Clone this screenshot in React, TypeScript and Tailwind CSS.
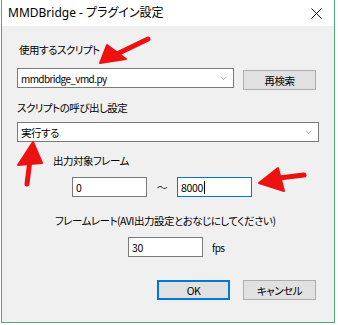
import { ChevronDown } from "lucide-react";

const ui =
  "font-['Noto_Sans_CJK_JP',sans-serif] [font-feature-settings:'palt'] text-[10.5px] leading-[13px] tracking-[-0.5px] text-black";
const latin = "text-[10px] tracking-[-0.6px]";

function Combo({ value, width, mono }: { value: string; width: string; mono?: boolean }) {
  return (
    <div className={`flex items-center h-[20px] bg-white border border-[#7a7a7a] pl-[3px] pr-[5px] ${width}`}>
      <span className={`flex-1 whitespace-nowrap ${mono ? latin : ""}`}>{value}</span>
      <ChevronDown className="w-[9px] h-[9px] text-[#707070]" strokeWidth={1.5} />
    </div>
  );
}

function Field({ value, focused }: { value: string; focused?: boolean }) {
  return (
    <div
      className={`flex items-center h-[20px] w-[75px] bg-white border pl-[3px] ${
        focused ? "border-[#0078d7]" : "border-[#7a7a7a]"
      }`}
    >
      <span className="text-[10.5px] tracking-[-0.3px]">{value}</span>
      {focused && <span className="w-px h-[13px] bg-black ml-px" />}
    </div>
  );
}

function Btn({ label, primary }: { label: string; primary?: boolean }) {
  return (
    <div
      className={`flex items-center justify-center w-[73px] h-[20px] bg-[#e1e1e1] ${
        primary ? "border-2 border-[#0078d7]" : "border border-[#adadad]"
      }`}
    >
      {label}
    </div>
  );
}

export default function App() {
  return (
    <div className="w-[338px] h-[325px] bg-white pl-px overflow-hidden">
      <div className="relative w-[334px] h-[323px] border-x border-b border-[#52a877] bg-[#f0f0f0] flex flex-col">
        {/* title bar */}
        <div className="h-[26px] bg-white flex items-center pl-[6px] pr-[10px] shrink-0">
          <span className="flex-1 font-['Noto_Sans','Noto_Sans_CJK_JP',sans-serif] [font-feature-settings:'palt'] text-[12px] text-black">
            MMDBridge - プラグイン設定
          </span>
          <svg width="11" height="11" viewBox="0 0 11 11" className="mr-[2px]">
            <path d="M0.5 0.5 L10.5 10.5 M10.5 0.5 L0.5 10.5" stroke="#111" strokeWidth="1" />
          </svg>
        </div>

        {/* body */}
        <div className={`${ui} flex flex-col pl-[15px]`}>
          <div className="mt-[17px] pl-[2px]">使用するスクリプト</div>
          <div className="mt-[12px] flex items-start gap-[9px]">
            <Combo value="mmdbridge_vmd.py" width="w-[217px]" mono />
            <div className="mt-[2px]">
              <Btn label="再検索" />
            </div>
          </div>
          <div className="mt-[11px]">スクリプトの呼び出し設定</div>
          <div className="mt-[8px]">
            <Combo value="実行する" width="w-[302px]" />
          </div>

          <div className="mt-[12px] pl-[36px]">出力対象フレーム</div>
          <div className="mt-[10px] pl-[55px] flex items-center">
            <Field value="0" />
            <span className="w-[30px] text-center text-[11px] text-[#333]">～</span>
            <Field value="8000" focused />
          </div>

          <div className="mt-[17px] pl-[38px]">フレームレート(AVI出力設定とおなじにしてください)</div>
          <div className="mt-[10px] pl-[111px] flex items-center">
            <Field value="30" />
            <span className={`ml-[9px] ${latin}`}>fps</span>
          </div>

          <div className="mt-[23px] pl-[140px] flex gap-[13px]">
            <Btn label="OK" primary />
            <Btn label="キャンセル" />
          </div>
        </div>

        {/* red annotation arrows */}
        <svg className="absolute left-[-1px] top-0 pointer-events-none" width="338" height="325" viewBox="0 0 338 325">
          <g fill="#ee1111" stroke="#ee1111" strokeLinejoin="round" strokeLinecap="round">
            <path d="M147 39 L116 54" strokeWidth="5" fill="none" />
            <path d="M99 63 L106 45 L125 59 Z" strokeWidth="2" />
            <path d="M26 184 L29 160" strokeWidth="5" fill="none" />
            <path d="M32 142 L17 165 L41 163 Z" strokeWidth="2" />
            <path d="M303 175 L278 178" strokeWidth="5" fill="none" />
            <path d="M258 183 L277 168 L283 191 Z" strokeWidth="2" />
          </g>
        </svg>
      </div>
    </div>
  );
}
